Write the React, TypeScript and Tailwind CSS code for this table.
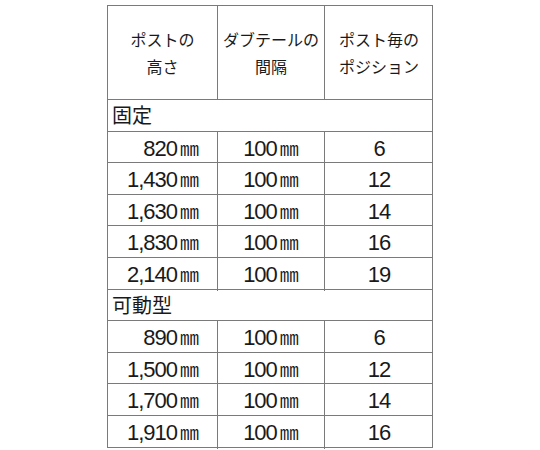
const jp = { fontFamily: '"Noto Sans CJK JP", sans-serif' };

type Row = { h: string; s: string; p: string };

const fixed: Row[] = [
  { h: "820", s: "100", p: "6" },
  { h: "1,430", s: "100", p: "12" },
  { h: "1,630", s: "100", p: "14" },
  { h: "1,830", s: "100", p: "16" },
  { h: "2,140", s: "100", p: "19" },
];

const movable: Row[] = [
  { h: "890", s: "100", p: "6" },
  { h: "1,500", s: "100", p: "12" },
  { h: "1,700", s: "100", p: "14" },
  { h: "1,910", s: "100", p: "16" },
];

const Num = ({ v }: { v: string }) => (
  <span className="inline-flex items-baseline">
    <span className="font-['Liberation_Sans',sans-serif] text-[22px] tracking-[-1px]">{v}</span>
    <span className="ml-[3px] text-[19px]" style={jp}>㎜</span>
  </span>
);

const DataRow = ({ r }: { r: Row }) => (
  <div className="grid h-[31.6px] grid-cols-[109px_107px_109px] border-t border-[#7a7a7a]">
    <div className="flex items-center justify-end pr-[18px]">
      <Num v={r.h} />
    </div>
    <div className="flex items-center justify-center border-l border-[#7a7a7a]">
      <Num v={r.s} />
    </div>
    <div className="flex items-center justify-center border-l border-[#7a7a7a] font-['Liberation_Sans',sans-serif] text-[22px] tracking-[-1px]">
      {r.p}
    </div>
  </div>
);

const Section = ({ label }: { label: string }) => (
  <div className="flex h-[31.6px] items-center border-t border-[#7a7a7a] pl-[4px] text-[20px]" style={jp}>
    {label}
  </div>
);

export default function App() {
  return (
    <div className="flex h-[450px] w-[540px] justify-center bg-white pt-[5px] text-[#1a1a1a]">
      <div className="h-[443px] w-[326px] border border-[#7a7a7a]">
        <div className="grid h-[93px] grid-cols-[109px_107px_109px] text-[16px] leading-[27px]" style={jp}>
          <div className="flex flex-col items-center justify-center">
            <span>ポストの</span>
            <span>高さ</span>
          </div>
          <div className="flex flex-col items-center justify-center border-l border-[#7a7a7a]">
            <span>ダブテールの</span>
            <span>間隔</span>
          </div>
          <div className="flex flex-col items-center justify-center border-l border-[#7a7a7a]">
            <span>ポスト毎の</span>
            <span>ポジション</span>
          </div>
        </div>
        <Section label="固定" />
        {fixed.map((r) => (
          <DataRow key={r.h} r={r} />
        ))}
        <Section label="可動型" />
        {movable.map((r) => (
          <DataRow key={r.h} r={r} />
        ))}
      </div>
    </div>
  );
}
